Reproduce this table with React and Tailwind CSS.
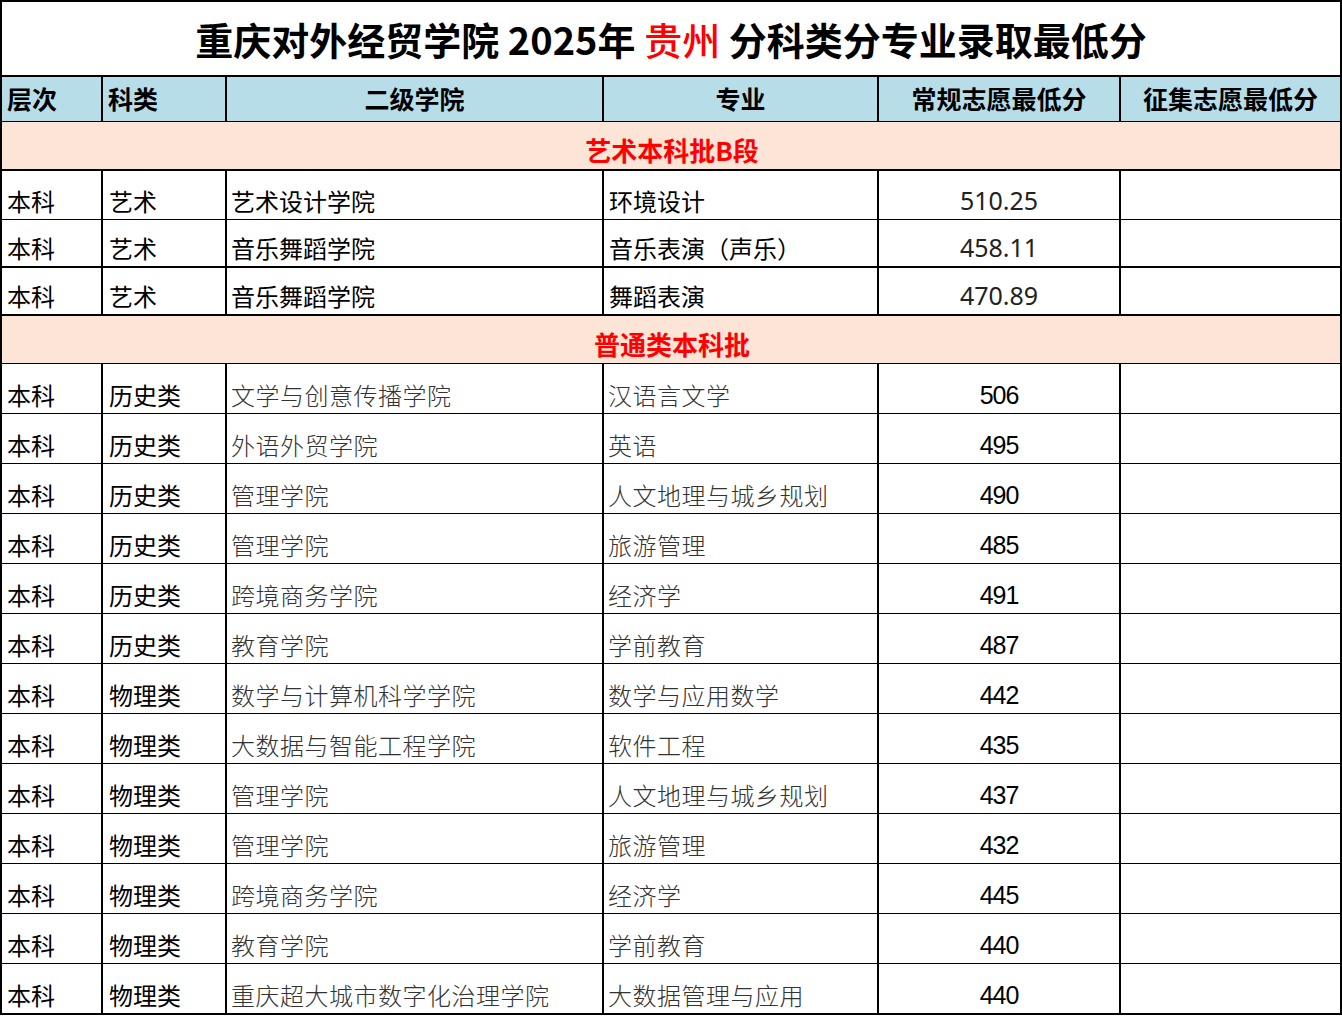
const cols = ['w-[101px]', 'w-[124px]', 'w-[377px]', 'w-[275px]', 'w-[242px]', 'flex-1']

const artRows = [
  { level: '本科', type: '艺术', school: '艺术设计学院', major: '环境设计', score: '510.25', h: 'h-[49px]', b: 'border-b' },
  { level: '本科', type: '艺术', school: '音乐舞蹈学院', major: '音乐表演（声乐）', score: '458.11', h: 'h-[48px]', b: 'border-b-2' },
  { level: '本科', type: '艺术', school: '音乐舞蹈学院', major: '舞蹈表演', score: '470.89', h: 'h-[48px]', b: 'border-b-2' },
]

const normalRows = [
  ['历史类', '文学与创意传播学院', '汉语言文学', '506'],
  ['历史类', '外语外贸学院', '英语', '495'],
  ['历史类', '管理学院', '人文地理与城乡规划', '490'],
  ['历史类', '管理学院', '旅游管理', '485'],
  ['历史类', '跨境商务学院', '经济学', '491'],
  ['历史类', '教育学院', '学前教育', '487'],
  ['物理类', '数学与计算机科学学院', '数学与应用数学', '442'],
  ['物理类', '大数据与智能工程学院', '软件工程', '435'],
  ['物理类', '管理学院', '人文地理与城乡规划', '437'],
  ['物理类', '管理学院', '旅游管理', '432'],
  ['物理类', '跨境商务学院', '经济学', '445'],
  ['物理类', '教育学院', '学前教育', '440'],
  ['物理类', '重庆超大城市数字化治理学院', '大数据管理与应用', '440'],
]

function Cell({ i, className = '', children }) {
  return (
    <div className={`${cols[i]} ${i < 5 ? 'border-r-2' : ''} border-black flex h-full ${className}`}>
      {children}
    </div>
  )
}

function Section({ title, h, b }) {
  return (
    <div className={`${h} ${b} border-black bg-[#fce4d6] flex items-center justify-center pl-[2px] pt-[8px]`}>
      <span className="text-[26px] font-bold text-[#ff0000] leading-none">{title}</span>
    </div>
  )
}

export default function App() {
  return (
    <div className="w-[1342px] h-[1016px] bg-white font-['Noto_Sans_CJK_SC','Noto_Sans',sans-serif] text-black">
      <div className="border-2 border-black">
        {/* title */}
        <div className="h-[75px] border-b-2 border-black flex items-center justify-center">
          <h1 className="text-[38px] font-bold leading-none">
            重庆对外经贸学院 2025年 <span className="text-[#ff0000] font-medium">贵州</span> 分科类分专业录取最低分
          </h1>
        </div>

        {/* header */}
        <div className="h-[45px] border-b border-black bg-[#b7dde8] flex text-[25px] font-bold leading-none">
          <Cell i={0} className="items-center pl-[5px] pb-[2px]">层次</Cell>
          <Cell i={1} className="items-center pl-[5px] pb-[2px]">科类</Cell>
          <Cell i={2} className="items-center justify-center pb-[2px]">二级学院</Cell>
          <Cell i={3} className="items-center justify-center pb-[2px]">专业</Cell>
          <Cell i={4} className="items-center justify-center pb-[2px]">常规志愿最低分</Cell>
          <Cell i={5} className="items-center justify-center pb-[2px]">征集志愿最低分</Cell>
        </div>

        <Section title="艺术本科批B段" h="h-[49px]" b="border-b-2" />

        {artRows.map((r, idx) => (
          <div key={idx} className={`${r.h} ${r.b} border-black flex text-[24px] leading-none`}>
            <Cell i={0} className="items-end pb-[6px] pl-[5px]">{r.level}</Cell>
            <Cell i={1} className="items-end pb-[6px] pl-[6px]">{r.type}</Cell>
            <Cell i={2} className="items-end pb-[6px] pl-[4px]">{r.school}</Cell>
            <Cell i={3} className="items-end pb-[6px] pl-[5px]">{r.major}</Cell>
            <Cell i={4} className="items-end pb-[6px] justify-center font-['Noto_Sans',sans-serif] text-[25px] text-[#222]">{r.score}</Cell>
            <Cell i={5} />
          </div>
        ))}

        <Section title="普通类本科批" h="h-[48px]" b="border-b" />

        {normalRows.map((r, idx) => (
          <div
            key={idx}
            className={`${idx === normalRows.length - 1 ? 'h-[49px]' : 'h-[50px] border-b'} border-black flex text-[24px] leading-none`}
          >
            <Cell i={0} className="items-end pb-[6px] pl-[5px]">本科</Cell>
            <Cell i={1} className="items-end pb-[6px] pl-[6px]">{r[0]}</Cell>
            <Cell i={2} className="items-end pb-[6px] pl-[4px] font-light text-[#333] tracking-[0.5px]">{r[1]}</Cell>
            <Cell i={3} className="items-end pb-[6px] pl-[4px] font-light text-[#333] tracking-[0.5px]">{r[2]}</Cell>
            <Cell i={4} className="items-end pb-[5px] justify-center font-['Liberation_Sans',sans-serif] text-[25px] tracking-[-1px]">{r[3]}</Cell>
            <Cell i={5} />
          </div>
        ))}
      </div>
    </div>
  )
}
